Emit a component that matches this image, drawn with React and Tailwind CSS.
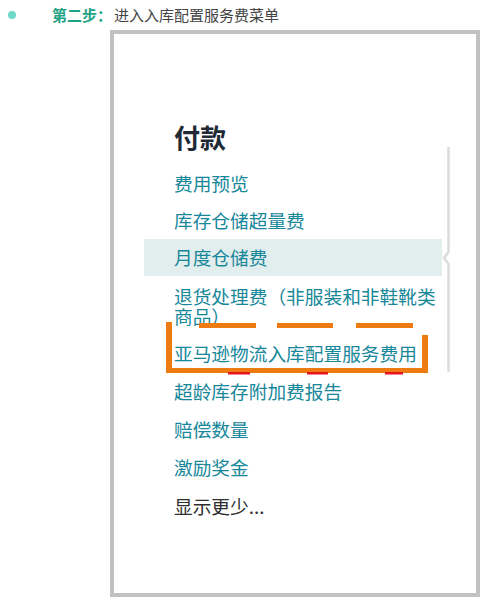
import React from "react";

const font = { fontFamily: '"Noto Sans CJK SC", "Noto Sans", sans-serif' };

const items = [
  { label: "费用预览", h: "h-[37px]" },
  { label: "库存仓储超量费", h: "h-[37px]" },
  { label: "月度仓储费", h: "h-[37px]", active: true },
  { label: "退货处理费（非服装和非鞋靴类商品）", h: "h-[59px]", multi: true },
  { label: "亚马逊物流入库配置服务费用", h: "h-[37px]" },
  { label: "超龄库存附加费报告", h: "h-[38px]" },
  { label: "赔偿数量", h: "h-[38px]" },
  { label: "激励奖金", h: "h-[38px]" },
  { label: "显示更少...", h: "h-[40px]", dark: true },
];

function MenuRow({ item }) {
  if (item.multi) {
    return (
      <div className={`${item.h} pl-[30px] pr-[2px] pt-[10px] text-[18.7px] leading-[20px] text-[#17879a]`}>
        {item.label}
      </div>
    );
  }
  return (
    <div
      className={`${item.h} flex items-center pl-[30px] text-[18.7px] ${
        item.dark ? "text-[#2e2e2e]" : "text-[#17879a]"
      } ${item.active ? "bg-[#e2eded]" : ""}`}
    >
      {item.label}
    </div>
  );
}

export default function App() {
  return (
    <div className="relative w-[495px] h-[600px] bg-white overflow-hidden" style={font}>
      {/* step title */}
      <div className="flex items-center h-[30px]">
        <span className="ml-[8px] w-[8px] h-[8px] rounded-full bg-[#6fd8c9]" />
        <span className="ml-[36px] text-[15px] font-bold text-[#1ea384]">第二步：</span>
        <span className="ml-[2px] text-[15px] text-[#444]">进入入库配置服务费菜单</span>
      </div>

      {/* screenshot frame */}
      <div className="ml-[110px] w-[370px] h-[567px] border-4 border-[#c2c2c2] bg-white">
        <div className="pt-[87px] pl-[60px] h-[32px] box-content">
          <div className="text-[26px] font-bold leading-[32px] text-[#1f2a36]">付款</div>
        </div>
        <div className="mt-[12px] ml-[30px] w-[298px]">
          {items.map((it) => (
            <MenuRow key={it.label} item={it} />
          ))}
        </div>
      </div>

      {/* flyout edge + annotation marks */}
      <svg className="absolute left-0 top-0 pointer-events-none" width="495" height="600">
        <path d="M448.5 147 L448.5 252 L444 258 L448.5 264 L448.5 372" fill="none" stroke="#dcdcdc" strokeWidth="2.5" />
        <g fill="#ee7a12">
          <rect x="166" y="322" width="6" height="51" />
          <rect x="199" y="323" width="57" height="5" />
          <rect x="277" y="323" width="56" height="5" />
          <rect x="356" y="323" width="57" height="5" />
          <rect x="422" y="335" width="6" height="38" />
          <rect x="166" y="368" width="262" height="5" />
        </g>
        <g fill="#e8151b">
          <rect x="228" y="372" width="22" height="2.5" />
          <rect x="307" y="372" width="21" height="2.5" />
          <rect x="385" y="372" width="18" height="2.5" />
        </g>
      </svg>
    </div>
  );
}
